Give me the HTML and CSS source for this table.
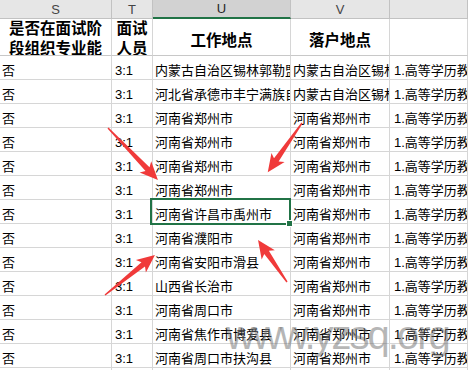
FILE: index.html
```html
<!DOCTYPE html>
<html lang="zh">
<head>
<meta charset="utf-8">
<title>Sheet</title>
<link rel="stylesheet" href="styles.css">
</head>
<body>
<div class="sheet">
  <div class="h">S</div><div class="h">T</div><div class="h hsel">U</div><div class="h">V</div><div class="h"></div>

  <div class="t">是否在面试阶<br>段组织专业能</div><div class="t">面试<br>人员</div><div class="t one">工作地点</div><div class="t one">落户地点</div><div class="t"></div>

  <div class="c">否</div><div class="c n">3:1</div><div class="c u">内蒙古自治区锡林郭勒盟</div><div class="c">内蒙古自治区锡林郭勒盟</div><div class="c w">1.高等学历教育</div>
  <div class="c">否</div><div class="c n">3:1</div><div class="c u">河北省承德市丰宁满族自治县</div><div class="c">内蒙古自治区锡林郭勒盟</div><div class="c w">1.高等学历教育</div>
  <div class="c">否</div><div class="c n">3:1</div><div class="c u">河南省郑州市</div><div class="c">河南省郑州市</div><div class="c w">1.高等学历教育</div>
  <div class="c">否</div><div class="c n">3:1</div><div class="c u">河南省郑州市</div><div class="c">河南省郑州市</div><div class="c w">1.高等学历教育</div>
  <div class="c">否</div><div class="c n">3:1</div><div class="c u">河南省郑州市</div><div class="c">河南省郑州市</div><div class="c w">1.高等学历教育</div>
  <div class="c">否</div><div class="c n">3:1</div><div class="c u">河南省郑州市</div><div class="c">河南省郑州市</div><div class="c w">1.高等学历教育</div>
  <div class="c">否</div><div class="c n">3:1</div><div class="c u selected">河南省许昌市禹州市<span class="selbox"><span class="handle"></span></span></div><div class="c">河南省郑州市</div><div class="c w">1.高等学历教育</div>
  <div class="c">否</div><div class="c n">3:1</div><div class="c u">河南省濮阳市</div><div class="c">河南省郑州市</div><div class="c w">1.高等学历教育</div>
  <div class="c">否</div><div class="c n">3:1</div><div class="c u">河南省安阳市滑县</div><div class="c">河南省郑州市</div><div class="c w">1.高等学历教育</div>
  <div class="c">否</div><div class="c n">3:1</div><div class="c u">山西省长治市</div><div class="c">河南省郑州市</div><div class="c w">1.高等学历教育</div>
  <div class="c">否</div><div class="c n">3:1</div><div class="c u">河南省周口市</div><div class="c">河南省郑州市</div><div class="c w">1.高等学历教育</div>
  <div class="c">否</div><div class="c n">3:1</div><div class="c u">河南省焦作市博爱县</div><div class="c">河南省郑州市</div><div class="c w">1.高等学历教育</div>
  <div class="c">否</div><div class="c n">3:1</div><div class="c u">河南省周口市扶沟县</div><div class="c">河南省郑州市</div><div class="c w">1.高等学历教育</div>
  <div class="c">否</div><div class="c n">3:1</div><div class="c u">河南省郑州市</div><div class="c">河南省郑州市</div><div class="c w">1.高等学历教育</div>
</div>

<svg class="arrows" width="468" height="370" viewBox="0 0 468 370" aria-hidden="true">
  <g fill="#f03a3a">
    <polygon transform="translate(108,128) rotate(46.1)" points="0,-0.7 57,-2.8 54,-8 72,0 54,8 57,2.8 0,0.7"/>
    <polygon transform="translate(302,123) rotate(124.8)" points="0,-0.7 45,-2.8 42,-8 60,0 42,8 45,2.8 0,0.7"/>
    <polygon transform="translate(287,282) rotate(-124.6)" points="0,-0.7 36,-2.8 33,-8 51,0 33,8 36,2.8 0,0.7"/>
    <polygon transform="translate(105,295) rotate(-38.7)" points="0,-0.7 49,-2.8 46,-8 64,0 46,8 49,2.8 0,0.7"/>
  </g>
</svg>

<div class="watermark">www.yzsq.org</div>
</body>
</html>
```

FILE: styles.css
```css
html, body {
  margin: 0;
  padding: 0;
  background: #ffffff;
  overflow: hidden;
}

body {
  width: 468px;
  height: 370px;
  position: relative;
  font-family: "Liberation Sans", "Noto Sans CJK SC", sans-serif;
}

.sheet {
  display: grid;
  grid-template-columns: 112px 41px 138px 99px 78px;
  grid-template-rows: 19px 37px repeat(14, 24px);
}

.sheet > div {
  box-sizing: border-box;
  border-right: 1px solid #d6d6d6;
  border-bottom: 1px solid #d6d6d6;
  overflow: hidden;
  white-space: nowrap;
}

.sheet .h {
  background: #e6e6e6;
  border-right-color: #c2c2c2;
  border-bottom-color: #c2c2c2;
  color: #444444;
  font-size: 13px;
  display: flex;
  align-items: center;
  justify-content: center;
}

.sheet .hsel {
  background: #d2d2d2;
  border-bottom: 2px solid #217346;
  color: #262626;
}

.sheet .t {
  font-family: "Noto Sans CJK SC", sans-serif;
  font-weight: 700;
  font-size: 15.5px;
  line-height: 20px;
  color: #000000;
  display: flex;
  align-items: center;
  justify-content: center;
  text-align: center;
  border-bottom-color: #c8c8c8;
}

.sheet .one {
  padding-top: 3px;
}

.sheet .c {
  font-size: 13px;
  line-height: 15px;
  color: #000000;
  display: flex;
  align-items: flex-end;
  padding: 0 0 1px 2px;
}

.sheet .n {
  padding-left: 3px;
}

.sheet .u {
  padding-left: 2px;
}

.sheet .w {
  padding-left: 4px;
}

.sheet .selected {
  position: relative;
  overflow: visible;
}

.selbox {
  position: absolute;
  left: -3px;
  top: -2px;
  width: 141px;
  height: 27px;
  box-sizing: border-box;
  border: 2px solid #217346;
  z-index: 2;
}

.handle {
  position: absolute;
  right: -4px;
  bottom: -4px;
  width: 5px;
  height: 5px;
  background: #217346;
  border: 1px solid #ffffff;
}

.arrows {
  position: absolute;
  left: 0;
  top: 0;
  z-index: 3;
}

.watermark {
  position: absolute;
  left: 226px;
  top: 315px;
  font-family: "Liberation Sans", sans-serif;
  font-size: 40px;
  line-height: 40px;
  letter-spacing: -2px;
  color: rgba(110, 110, 110, 0.5);
  white-space: nowrap;
  z-index: 4;
}
```
